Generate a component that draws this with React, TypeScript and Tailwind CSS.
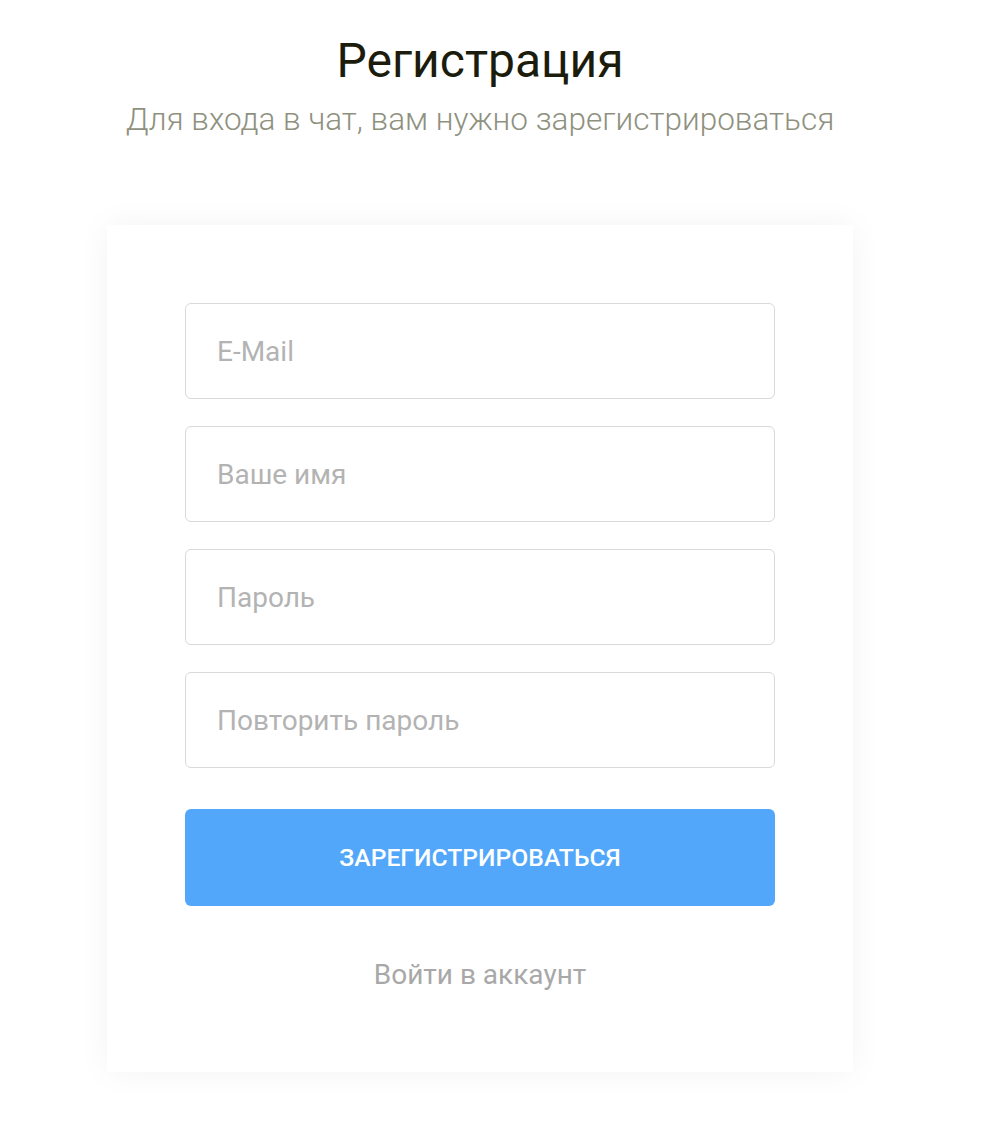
import React from 'react';

const fields = ['E-Mail', 'Ваше имя', 'Пароль', 'Повторить пароль'];

export default function App() {
  return (
    <div className="min-h-screen bg-white font-['Roboto',sans-serif]">
      <div className="w-[960px] flex flex-col items-center pt-[28px]">
        <h1 className="text-[48px] leading-[66px] text-[#1b1c0c]">Регистрация</h1>
        <p className="mt-[6px] text-[31.5px] leading-[40px] font-light text-[#8f917f]">
          Для входа в чат, вам нужно зарегистрироваться
        </p>

        <div className="mt-[85px] w-[746px] bg-white px-[78px] pt-[78px] pb-[76px] shadow-[0_0_30px_rgba(0,0,0,0.05)]">
          <div className="flex flex-col gap-[27px]">
            {fields.map((f) => (
              <input
                key={f}
                type={f.startsWith('Пар') || f.startsWith('Повт') ? 'password' : 'text'}
                placeholder={f}
                className="h-[96px] w-full rounded-[6px] border border-[#d9d9d9] px-[31px] text-[28px] text-[#333] placeholder:text-[#b3b3b3] outline-none"
              />
            ))}
          </div>
          <button className="mt-[41px] h-[97px] w-full rounded-[6px] bg-[#52a7fb] text-[24.7px] font-medium uppercase text-white">
            Зарегистрироваться
          </button>
          <div className="mt-[48px] text-center">
            <a className="text-[28px] text-[#a8a8a8]" href="#">Войти в аккаунт</a>
          </div>
        </div>
      </div>
    </div>
  );
}
